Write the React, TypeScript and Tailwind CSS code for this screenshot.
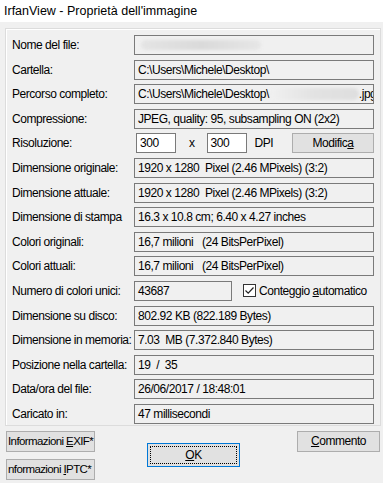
import React from 'react';

const rows: { label: string; value?: string; kind?: string }[] = [
  { label: 'Nome del file:', kind: 'name' },
  { label: 'Cartella:', value: 'C:\\Users\\Michele\\Desktop\\' },
  { label: 'Percorso completo:', kind: 'path' },
  { label: 'Compressione:', value: 'JPEG, quality: 95, subsampling ON (2x2)' },
  { label: 'Risoluzione:', kind: 'dpi' },
  { label: 'Dimensione originale:', value: '1920 x 1280  Pixel (2.46 MPixels) (3:2)' },
  { label: 'Dimensione attuale:', value: '1920 x 1280  Pixel (2.46 MPixels) (3:2)' },
  { label: 'Dimensione di stampa', value: '16.3 x 10.8 cm; 6.40 x 4.27 inches' },
  { label: 'Colori originali:', value: '16,7 milioni   (24 BitsPerPixel)' },
  { label: 'Colori attuali:', value: '16,7 milioni   (24 BitsPerPixel)' },
  { label: 'Numero di colori unici:', kind: 'count' },
  { label: 'Dimensione su disco:', value: '802.92 KB (822.189 Bytes)' },
  { label: 'Dimensione in memoria:', value: '7.03  MB (7.372.840 Bytes)' },
  { label: 'Posizione nella cartella:', value: '19  /  35' },
  { label: 'Data/ora del file:', value: '26/06/2017 / 18:48:01' },
  { label: 'Caricato in:', value: '47 millisecondi' },
];

const Field: React.FC<{ children?: React.ReactNode; className?: string }> = ({ children, className }) => (
  <div className={`h-5 border border-[#7a7a7a] bg-[#f0f0f0] px-[3px] flex items-center overflow-hidden whitespace-pre ${className ?? ''}`}>
    {children}
  </div>
);

const Btn: React.FC<{ children: React.ReactNode; className?: string }> = ({ children, className }) => (
  <button className={`h-5 border border-[#adadad] bg-[#e1e1e1] flex items-center justify-center whitespace-pre overflow-hidden ${className ?? ''}`}>
    {children}
  </button>
);

export default function App() {
  return (
    <div className="w-[383px] h-[483px] bg-[#f0f0f0] text-black text-[12px] tracking-[-0.45px] leading-none overflow-hidden" style={{ fontFamily: '"Liberation Sans", Arial, sans-serif' }}>
      <div className="h-[22px] bg-white flex items-center pl-[4px] text-[12.5px] tracking-normal">IrfanView - Proprietà dell'immagine</div>

      <div className="ml-[5px] mr-[2px] mt-[6px] border border-[#dcdcdc] shadow-[inset_1px_1px_0_#fff] pt-[6px] pb-px pr-[6px] flex flex-col gap-[4.6px]">
        {rows.map((r) => (
          <div key={r.label} className="flex items-center h-5">
            <div className="w-[128px] pl-[6px] shrink-0 whitespace-nowrap">{r.label}</div>
            {r.kind === 'name' && (
              <Field className="flex-1">
                <div className="ml-[3px] h-[10px] w-[120px] rounded-full bg-gradient-to-r from-[#e4e4e4] via-[#dadada] to-[#e6e6e6] blur-[1.5px]" />
              </Field>
            )}
            {r.kind === 'path' && (
              <Field className="flex-1">
                <span className="shrink-0">C:\Users\Michele\Desktop\</span>
                <div className="h-[12px] w-[88px] ml-[2px] rounded-full bg-gradient-to-r from-[#f0f0f0] via-[#e2e2e2] to-[#dedede] blur-[1.5px] shrink-0" />
                <span className="shrink-0">.jpg</span>
              </Field>
            )}
            {r.kind === 'dpi' && (
              <div className="flex-1 flex items-center">
                <div className="h-5 w-[40px] ml-[2px] border border-[#7a7a7a] bg-white px-[3px] flex items-center">300</div>
                <span className="ml-[13px]">x</span>
                <div className="h-5 w-[40px] ml-[12px] border border-[#7a7a7a] bg-white px-[3px] flex items-center">300</div>
                <span className="ml-[8px]">DPI</span>
                <Btn className="ml-auto w-[82px]">
                  <span>Modific<span className="underline">a</span></span>
                </Btn>
              </div>
            )}
            {r.kind === 'count' && (
              <div className="flex-1 flex items-center">
                <Field className="w-[98px]">43687</Field>
                <div className="ml-[11px] w-[13px] h-[13px] border border-[#333] bg-white flex items-center justify-center">
                  <svg width="11" height="11" viewBox="0 0 11 11">
                    <path d="M1.5 5.5 L4.2 8.2 L9.5 2.5" fill="none" stroke="#222" strokeWidth="1.2" />
                  </svg>
                </div>
                <span className="ml-[3px] whitespace-nowrap">Conteggio <span className="underline">a</span>utomatico</span>
              </div>
            )}
            {r.value !== undefined && <Field className="flex-1">{r.value}</Field>}
          </div>
        ))}
      </div>

      <div className="flex items-start">
        <div className="ml-[6px] mt-[5px] flex flex-col gap-[7px]">
          <Btn className="w-[89px] h-[21px] justify-start pl-px text-[11.5px] tracking-[-0.6px]">
            <span>Informazioni <span className="underline">E</span>XIF*</span>
          </Btn>
          <Btn className="w-[89px] h-[21px] justify-start pl-px text-[11.5px] tracking-[-0.6px]">
            <span>nformazioni <span className="underline">I</span>PTC*</span>
          </Btn>
        </div>
        <button className="ml-[52px] mt-[17px] w-[93px] h-[24px] border border-[#0078d7] bg-[#e1e1e1] p-[2px]">
          <div className="w-full h-full border border-dotted border-black flex items-center justify-center">
            <span><span className="underline">O</span>K</span>
          </div>
        </button>
        <Btn className="ml-auto mr-[3px] mt-[5px] w-[83px] h-[21px]">
          <span><span className="underline">C</span>ommento</span>
        </Btn>
      </div>
    </div>
  );
}
